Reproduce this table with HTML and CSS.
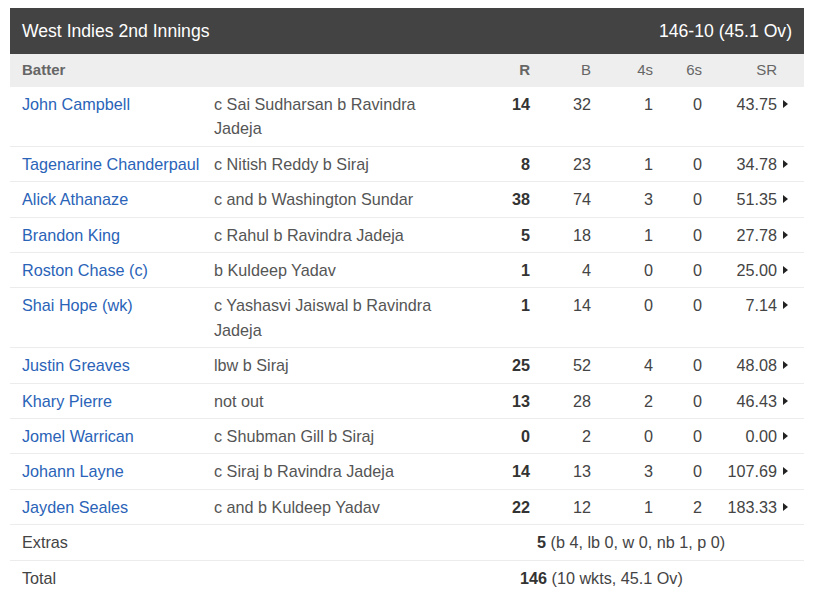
FILE: index.html
```html
<!DOCTYPE html>
<html lang="en">
<head>
<meta charset="utf-8">
<title>West Indies 2nd Innings</title>
<link rel="stylesheet" href="styles.css">
</head>
<body>
<div class="card">
  <div class="title-bar">
    <span class="title">West Indies 2nd Innings</span>
    <span class="score">146-10 (45.1 Ov)</span>
  </div>
  <div class="row head">
    <div class="c-name strong">Batter</div>
    <div class="c-dis"></div>
    <div class="c-num strong">R</div>
    <div class="c-num">B</div>
    <div class="c-num">4s</div>
    <div class="c-num">6s</div>
    <div class="c-num">SR</div>
    <div class="c-arrow"></div>
  </div>

  <div class="row">
    <div class="c-name"><a class="player">John Campbell</a></div>
    <div class="c-dis">c Sai Sudharsan b Ravindra Jadeja</div>
    <div class="c-num runs">14</div><div class="c-num">32</div><div class="c-num">1</div><div class="c-num">0</div><div class="c-num">43.75</div>
    <div class="c-arrow"><span class="tri"></span></div>
  </div>
  <div class="row">
    <div class="c-name"><a class="player">Tagenarine Chanderpaul</a></div>
    <div class="c-dis">c Nitish Reddy b Siraj</div>
    <div class="c-num runs">8</div><div class="c-num">23</div><div class="c-num">1</div><div class="c-num">0</div><div class="c-num">34.78</div>
    <div class="c-arrow"><span class="tri"></span></div>
  </div>
  <div class="row">
    <div class="c-name"><a class="player">Alick Athanaze</a></div>
    <div class="c-dis">c and b Washington Sundar</div>
    <div class="c-num runs">38</div><div class="c-num">74</div><div class="c-num">3</div><div class="c-num">0</div><div class="c-num">51.35</div>
    <div class="c-arrow"><span class="tri"></span></div>
  </div>
  <div class="row">
    <div class="c-name"><a class="player">Brandon King</a></div>
    <div class="c-dis">c Rahul b Ravindra Jadeja</div>
    <div class="c-num runs">5</div><div class="c-num">18</div><div class="c-num">1</div><div class="c-num">0</div><div class="c-num">27.78</div>
    <div class="c-arrow"><span class="tri"></span></div>
  </div>
  <div class="row">
    <div class="c-name"><a class="player">Roston Chase (c)</a></div>
    <div class="c-dis">b Kuldeep Yadav</div>
    <div class="c-num runs">1</div><div class="c-num">4</div><div class="c-num">0</div><div class="c-num">0</div><div class="c-num">25.00</div>
    <div class="c-arrow"><span class="tri"></span></div>
  </div>
  <div class="row">
    <div class="c-name"><a class="player">Shai Hope (wk)</a></div>
    <div class="c-dis">c Yashasvi Jaiswal b Ravindra Jadeja</div>
    <div class="c-num runs">1</div><div class="c-num">14</div><div class="c-num">0</div><div class="c-num">0</div><div class="c-num">7.14</div>
    <div class="c-arrow"><span class="tri"></span></div>
  </div>
  <div class="row">
    <div class="c-name"><a class="player">Justin Greaves</a></div>
    <div class="c-dis">lbw b Siraj</div>
    <div class="c-num runs">25</div><div class="c-num">52</div><div class="c-num">4</div><div class="c-num">0</div><div class="c-num">48.08</div>
    <div class="c-arrow"><span class="tri"></span></div>
  </div>
  <div class="row">
    <div class="c-name"><a class="player">Khary Pierre</a></div>
    <div class="c-dis">not out</div>
    <div class="c-num runs">13</div><div class="c-num">28</div><div class="c-num">2</div><div class="c-num">0</div><div class="c-num">46.43</div>
    <div class="c-arrow"><span class="tri"></span></div>
  </div>
  <div class="row">
    <div class="c-name"><a class="player">Jomel Warrican</a></div>
    <div class="c-dis">c Shubman Gill b Siraj</div>
    <div class="c-num runs">0</div><div class="c-num">2</div><div class="c-num">0</div><div class="c-num">0</div><div class="c-num">0.00</div>
    <div class="c-arrow"><span class="tri"></span></div>
  </div>
  <div class="row">
    <div class="c-name"><a class="player">Johann Layne</a></div>
    <div class="c-dis">c Siraj b Ravindra Jadeja</div>
    <div class="c-num runs">14</div><div class="c-num">13</div><div class="c-num">3</div><div class="c-num">0</div><div class="c-num">107.69</div>
    <div class="c-arrow"><span class="tri"></span></div>
  </div>
  <div class="row">
    <div class="c-name"><a class="player">Jayden Seales</a></div>
    <div class="c-dis">c and b Kuldeep Yadav</div>
    <div class="c-num runs">22</div><div class="c-num">12</div><div class="c-num">1</div><div class="c-num">2</div><div class="c-num">183.33</div>
    <div class="c-arrow"><span class="tri"></span></div>
  </div>

  <div class="row summary">
    <div class="c-name">Extras</div>
    <div class="c-value extras"><b>5</b> (b 4, lb 0, w 0, nb 1, p 0)</div>
  </div>
  <div class="row summary last">
    <div class="c-name">Total</div>
    <div class="c-value total"><b>146</b> (10 wkts, 45.1 Ov)</div>
  </div>
</div>
</body>
</html>
```

FILE: styles.css
```css
* { box-sizing: border-box; }

body {
  margin: 0;
  background: #ffffff;
  font-family: "Liberation Sans", Arial, sans-serif;
  color: #444;
}

.card {
  width: 794px;
  margin: 8px 0 0 10px;
}

.title-bar {
  height: 46px;
  background: #434343;
  color: #ffffff;
  display: flex;
  align-items: center;
  justify-content: space-between;
  padding: 0 12px;
  font-size: 17.6px;
}

.row {
  display: grid;
  grid-template-columns: 204px 256px 60px 61px 62px 49px 75px 27px;
  border-bottom: 1px solid #ececec;
  font-size: 16.2px;
  line-height: 24.4px;
  padding: 5px 0;
}

.row.head {
  background: #eeeeee;
  border-bottom: none;
  font-size: 15px;
  color: #666;
  height: 33px;
  padding: 0;
  align-items: center;
}

.c-name { padding-left: 12px; }
.c-dis { padding-right: 6px; color: #555; }
.c-num { text-align: right; }
.strong { font-weight: bold; }

.runs { font-weight: bold; color: #333; }

.player {
  color: #2a63b8;
  text-decoration: none;
}

.c-arrow {
  display: flex;
  align-items: flex-start;
  padding-left: 6px;
  padding-top: 8px;
}

.tri {
  width: 0;
  height: 0;
  border-left: 5px solid #222;
  border-top: 4px solid transparent;
  border-bottom: 4px solid transparent;
}

.row.summary { color: #444; }
.row.last { border-bottom: none; }

.c-value {
  grid-column: 3 / 9;
}
.c-value b { color: #333; }
.extras { padding-left: 67px; }
.total { padding-left: 50px; }
```
